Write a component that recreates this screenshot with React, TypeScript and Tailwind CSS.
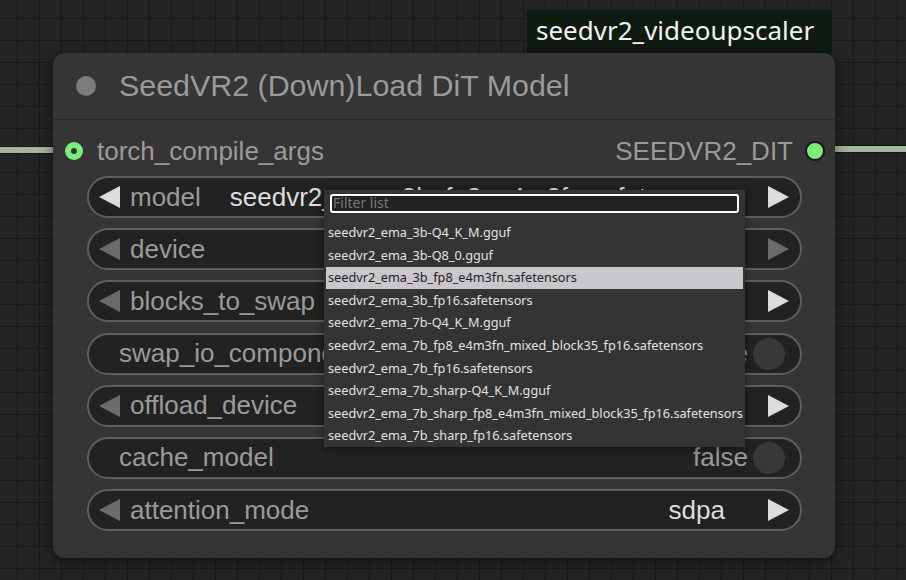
import type { ReactNode } from 'react';

const sans = "font-['Liberation_Sans',Arial,sans-serif]";
const ui = "font-['Noto_Sans','Open_Sans',sans-serif]";

const models = [
  'seedvr2_ema_3b-Q4_K_M.gguf',
  'seedvr2_ema_3b-Q8_0.gguf',
  'seedvr2_ema_3b_fp8_e4m3fn.safetensors',
  'seedvr2_ema_3b_fp16.safetensors',
  'seedvr2_ema_7b-Q4_K_M.gguf',
  'seedvr2_ema_7b_fp8_e4m3fn_mixed_block35_fp16.safetensors',
  'seedvr2_ema_7b_fp16.safetensors',
  'seedvr2_ema_7b_sharp-Q4_K_M.gguf',
  'seedvr2_ema_7b_sharp_fp8_e4m3fn_mixed_block35_fp16.safetensors',
  'seedvr2_ema_7b_sharp_fp16.safetensors',
];

function Arrow({ dir, dim }: { dir: 'left' | 'right'; dim?: boolean }) {
  return (
    <svg width="22" height="22" viewBox="0 0 22 22" className="shrink-0">
      <path
        d={dir === 'left' ? 'M21 0 L0 11 L21 22 Z' : 'M1 0 L22 11 L1 22 Z'}
        fill={dim ? '#6b6b6b' : '#dcdcdc'}
      />
    </svg>
  );
}

function Pill({ children }: { children: ReactNode }) {
  return (
    <div className="flex h-[42px] items-center rounded-full border-2 border-[#5e5e5e] bg-[#222222]">
      {children}
    </div>
  );
}

function ComboRow({
  label,
  value,
  leftDim,
  rightDim,
  truncate,
}: {
  label: string;
  value: string;
  leftDim?: boolean;
  rightDim?: boolean;
  truncate?: boolean;
}) {
  return (
    <Pill>
      <div className="flex w-full items-center pl-[10px] pr-[11px]">
        <Arrow dir="left" dim={leftDim} />
        <span className="ml-[9px] shrink-0 text-[26px] text-[#9a9a9a]">{label}</span>
        {truncate ? (
          <span className="ml-[29px] mr-[40px] min-w-0 flex-1 overflow-hidden whitespace-nowrap text-[26px] text-[#dddddd]">
            {value}
          </span>
        ) : (
          <span className="mr-[42px] flex-1 text-right text-[26px] text-[#dddddd]">{value}</span>
        )}
        <Arrow dir="right" dim={rightDim} />
      </div>
    </Pill>
  );
}

function ToggleRow({ label }: { label: string }) {
  return (
    <Pill>
      <div className="flex w-full items-center pl-[30px] pr-[15px]">
        <span className="text-[26px] text-[#9a9a9a]">{label}</span>
        <span className="ml-auto text-[26px] text-[#9a9a9a]">false</span>
        <div className="ml-[5px] h-[32px] w-[32px] rounded-full bg-[#383838]" />
      </div>
    </Pill>
  );
}

export default function App() {
  return (
    <div
      className={`relative h-[580px] w-[906px] overflow-hidden bg-[#242424] bg-[linear-gradient(to_right,#1a1a1a_1px,transparent_1px),linear-gradient(to_bottom,#1a1a1a_1px,transparent_1px)] bg-[size:22px_22px] bg-[position:17px_18px] ${sans}`}
    >
      {/* links */}
      <div className="absolute left-0 top-[146px] h-[8px] w-[60px] border-y border-[#151515] bg-[#a6b5a2]" />
      <div className="absolute right-0 top-[145px] h-[8px] w-[80px] border-y border-[#151515] bg-[#a6b5a2]" />

      {/* group title */}
      <div className={`absolute left-[527px] top-[10px] flex h-[44px] w-[305px] items-start bg-[#0f1a10] pl-[9px] pt-[2px] ${ui}`}>
        <span className="text-[26px] leading-[36px] text-[#f2f2f2]">seedvr2_videoupscaler</span>
      </div>

      {/* node */}
      <div className="absolute left-[53px] top-[53px] flex h-[505px] w-[782px] flex-col rounded-[12px] bg-[#353535] shadow-[0_4px_14px_rgba(0,0,0,0.5)]">
        <div className="flex h-[67px] shrink-0 items-center border-b border-[#2a2a2a] pl-[23px]">
          <div className="h-[20px] w-[20px] rounded-full bg-[#7c7c7c]" />
          <span className="ml-[23px] text-[30.4px] text-[#9a9a9a]">SeedVR2 (Down)Load DiT Model</span>
        </div>

        <div className="mt-[10px] flex h-[42px] items-center pl-[12px] pr-[10px]">
          <div className="flex h-[18px] w-[18px] items-center justify-center rounded-full bg-[#7af07a]">
            <div className="h-[6px] w-[6px] rounded-full bg-[#353535]" />
          </div>
          <span className="ml-[14px] text-[26px] text-[#9a9a9a]">torch_compile_args</span>
          <span className="ml-auto text-[26px] text-[#9a9a9a]">SEEDVR2_DIT</span>
          <div className="ml-[12px] h-[20px] w-[20px] rounded-full border-2 border-[#151515] bg-[#7af07a]" />
        </div>

        <div className="mt-[4px] flex flex-col gap-[10.2px] pl-[34px] pr-[33px]">
          <ComboRow label="model" value="seedvr2_ema_3b_fp8_e4m3fn.safetensors" truncate />
          <ComboRow label="device" value="cuda:0" leftDim rightDim />
          <ComboRow label="blocks_to_swap" value="0" leftDim />
          <ToggleRow label="swap_io_components" />
          <ComboRow label="offload_device" value="none" leftDim />
          <ToggleRow label="cache_model" />
          <ComboRow label="attention_mode" value="sdpa" leftDim />
        </div>
      </div>

      {/* dropdown */}
      <div className={`absolute left-[324px] top-[190px] flex h-[257px] w-[421px] flex-col bg-[#343434] px-[2px] shadow-[0_2px_8px_rgba(0,0,0,0.45)] ${ui}`}>
        <div className="mx-[4px] mt-[4px] flex h-[19px] items-center rounded-[3px] border-2 border-white bg-[#222222] pl-[1px]">
          <span className="text-[14px] leading-none text-[#777777]">Filter list</span>
        </div>
        <div className="mt-[9px] flex flex-col">
          {models.map((m, i) => (
            <div
              key={m}
              className={`flex h-[22.55px] items-center pl-[2px] text-[12.7px] ${
                i === 2 ? 'bg-[#c9c7cb] text-[#1e1e1e]' : 'text-[#e2e2e2]'
              }`}
            >
              {m}
            </div>
          ))}
        </div>
      </div>
    </div>
  );
}
